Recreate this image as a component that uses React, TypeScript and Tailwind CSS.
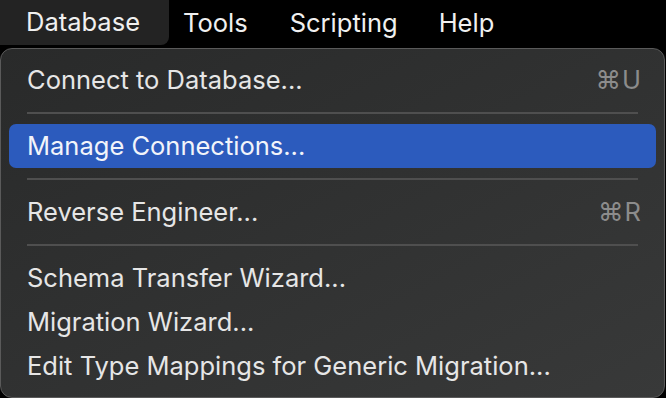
import React from "react";

const font = { fontFamily: 'Inter, "Noto Sans", "Liberation Sans", sans-serif' };

function Sep() {
  return (
    <div className="h-[22px] flex items-center px-[26px]">
      <div className="h-[2px] w-full bg-[#4f4f4f]" />
    </div>
  );
}

function Item({ label, shortcut, active }: { label: string; shortcut?: string; active?: boolean }) {
  return (
    <div
      className={
        "h-[44px] mx-[8px] pl-[18px] pr-[14px] flex items-center justify-between rounded-[7px] " +
        (active ? "bg-[#2c5bbd] text-[#f2f4fa]" : "text-[#e6e6e6]")
      }
    >
      <span className="leading-[44px]">{label}</span>
      {shortcut && <span className="text-[#8c8c8c] tracking-[1px]">{shortcut}</span>}
    </div>
  );
}

export default function App() {
  return (
    <div className="w-[666px] h-[398px] bg-black overflow-hidden text-[25.5px]" style={font}>
      <div className="h-[46px] flex items-stretch text-[#f0f0f0]">
        <div className="w-[169px] h-[45px] bg-[#232323] rounded-br-[8px] pl-[26px] flex items-center">Database</div>
        <div className="pl-[14px] flex items-center">Tools</div>
        <div className="pl-[42px] flex items-center">Scripting</div>
        <div className="pl-[41px] flex items-center">Help</div>
      </div>
      <div className="mt-[2px] w-[665px] h-[350px] rounded-[12px] border border-[#5a5a5a] bg-gradient-to-br from-[#292a2a] to-[#383939] pt-[9px]">
        <Item label="Connect to Database..." shortcut="⌘U" />
        <Sep />
        <Item label="Manage Connections..." active />
        <Sep />
        <Item label="Reverse Engineer..." shortcut="⌘R" />
        <Sep />
        <Item label="Schema Transfer Wizard..." />
        <Item label="Migration Wizard..." />
        <Item label="Edit Type Mappings for Generic Migration..." />
      </div>
    </div>
  );
}
